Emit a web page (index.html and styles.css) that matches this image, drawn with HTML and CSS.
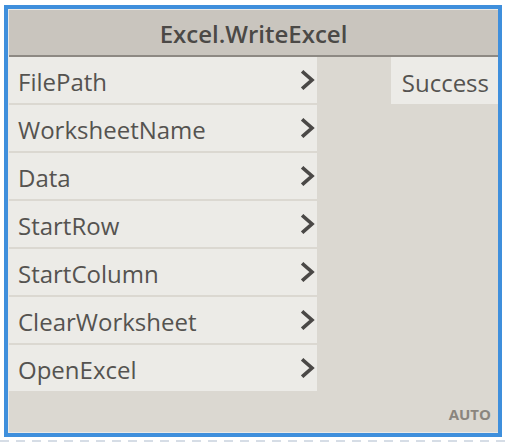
FILE: index.html
```html
<!DOCTYPE html>
<html>
<head>
<meta charset="utf-8">
<link rel="stylesheet" href="styles.css">
</head>
<body>
<div class="node">
  <div class="inner">
    <div class="header"><span class="title">Excel.WriteExcel</span></div>
    <div class="body">
      <div class="inputs">
        <div class="port"><span class="label">FilePath</span><svg class="chev" viewBox="0 0 14 20"><polyline points="2.5,2.5 11,10 2.5,17.5"/></svg></div>
        <div class="port"><span class="label">WorksheetName</span><svg class="chev" viewBox="0 0 14 20"><polyline points="2.5,2.5 11,10 2.5,17.5"/></svg></div>
        <div class="port"><span class="label">Data</span><svg class="chev" viewBox="0 0 14 20"><polyline points="2.5,2.5 11,10 2.5,17.5"/></svg></div>
        <div class="port"><span class="label">StartRow</span><svg class="chev" viewBox="0 0 14 20"><polyline points="2.5,2.5 11,10 2.5,17.5"/></svg></div>
        <div class="port"><span class="label">StartColumn</span><svg class="chev" viewBox="0 0 14 20"><polyline points="2.5,2.5 11,10 2.5,17.5"/></svg></div>
        <div class="port"><span class="label">ClearWorksheet</span><svg class="chev" viewBox="0 0 14 20"><polyline points="2.5,2.5 11,10 2.5,17.5"/></svg></div>
        <div class="port"><span class="label">OpenExcel</span><svg class="chev" viewBox="0 0 14 20"><polyline points="2.5,2.5 11,10 2.5,17.5"/></svg></div>
      </div>
      <div class="outputs">
        <div class="out"><span class="label">Success</span></div>
      </div>
    </div>
    <div class="footer"><span class="auto">AUTO</span></div>
  </div>
</div>
</body>
</html>
```
FILE: styles.css
```css
html, body {
  margin: 0;
  padding: 0;
}
body {
  width: 508px;
  height: 444px;
  background-color: #ffffff;
  background-image: repeating-linear-gradient(90deg, #d6dde6 0 9px, transparent 9px 16px);
  background-size: 100% 2px;
  background-position: 0 440px;
  background-repeat: no-repeat;
  font-family: "Open Sans", "DejaVu Sans", sans-serif;
  overflow: hidden;
}
.node {
  margin: 5px 0 0 4px;
  width: 498px;
  height: 432px;
  box-sizing: border-box;
  border: 4px solid #3f8fdc;
  background: #dbd8d1;
}
.inner {
  height: 100%;
  box-sizing: border-box;
  border: 1px solid #ebe9e5;
  border-right: none;
  display: flex;
  flex-direction: column;
}
.header {
  height: 45px;
  flex: none;
  background: #c9c5be;
  border-bottom: 2px solid #8d8983;
  display: flex;
  align-items: center;
  justify-content: center;
}
.title {
  font-size: 24px;
  font-weight: 600;
  line-height: 30px;
  padding-top: 3px;
  color: #4b4946;
}
.body {
  display: flex;
  flex: none;
}
.inputs {
  width: 308px;
  display: flex;
  flex-direction: column;
  gap: 2px;
}
.port {
  height: 46px;
  background: #ecebe7;
  display: flex;
  align-items: center;
  justify-content: space-between;
  padding: 0 2px 0 9px;
  color: #555350;
}
.label {
  font-size: 24px;
  line-height: 30px;
  padding-top: 4px;
}
.chev {
  width: 14px;
  height: 20px;
  flex: none;
}
.chev polyline {
  fill: none;
  stroke: #4a4846;
  stroke-width: 3.6;
  stroke-linecap: square;
  stroke-linejoin: miter;
}
.outputs {
  flex: 1;
  display: flex;
  justify-content: flex-end;
  align-items: flex-start;
}
.out {
  width: 107px;
  height: 47px;
  box-sizing: border-box;
  background: #ecebe7;
  display: flex;
  align-items: center;
  justify-content: flex-end;
  padding-right: 9px;
  color: #555350;
}
.footer {
  flex: 1;
  display: flex;
  justify-content: flex-end;
  align-items: flex-end;
  padding: 0 7px 8px 0;
}
.auto {
  font-size: 15px;
  font-weight: 700;
  color: #8a857e;
  line-height: 20px;
}
```
